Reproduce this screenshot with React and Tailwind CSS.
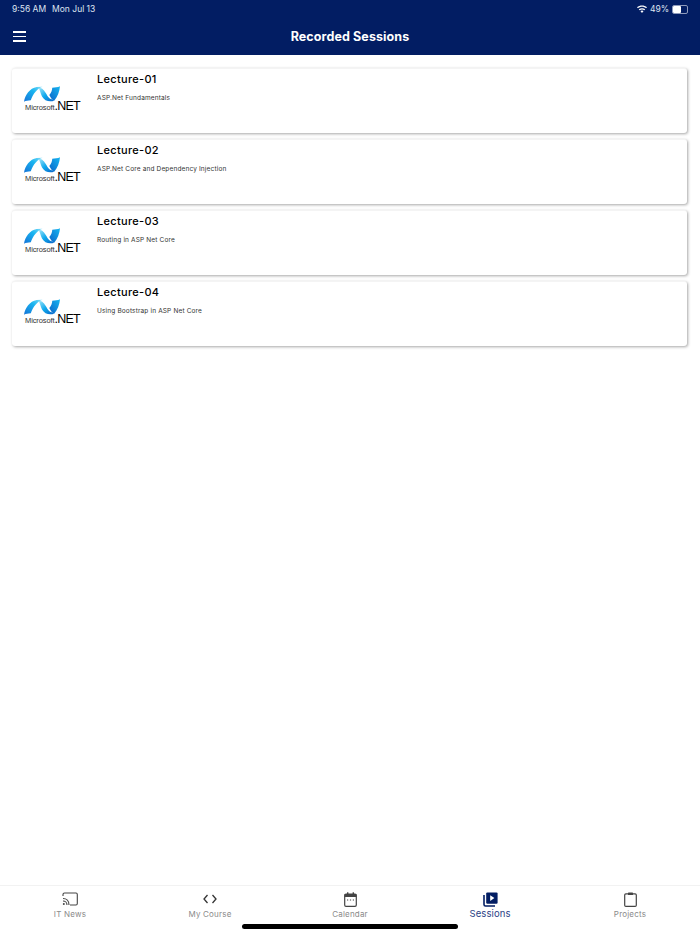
const lectures = [
  { title: 'Lecture-01', desc: 'ASP.Net Fundamentals' },
  { title: 'Lecture-02', desc: 'ASP.Net Core and Dependency Injection' },
  { title: 'Lecture-03', desc: 'Routing in ASP Net Core' },
  { title: 'Lecture-04', desc: 'Using Bootstrap in ASP Net Core' },
];

const DotNetLogo = ({ id }) => (
  <div className="w-[60px] h-[30px] flex flex-col">
    <svg width="37" height="17" viewBox="0 0 38 17" className="shrink-0 ml-[1px]">
      <defs>
        <linearGradient id={`left-${id}`} x1="0" y1="1" x2="1" y2="0">
          <stop offset="0" stopColor="#1672d6" />
          <stop offset="0.6" stopColor="#18b4f0" />
          <stop offset="1" stopColor="#7fdcf8" />
        </linearGradient>
        <linearGradient id={`mid-${id}`} x1="0" y1="0" x2="1" y2="1">
          <stop offset="0" stopColor="#9fe6fa" />
          <stop offset="0.5" stopColor="#0fa8ec" />
          <stop offset="1" stopColor="#0a63c8" />
        </linearGradient>
        <linearGradient id={`right-${id}`} x1="0" y1="1" x2="1" y2="0">
          <stop offset="0" stopColor="#0a63c8" />
          <stop offset="1" stopColor="#16b8f2" />
        </linearGradient>
      </defs>
      <path d="M0 16C1 9 6 2 13 0.8L19 0.6C14 2 9 8 7 14.5C4 14.6 2 15 0 16Z" fill={`url(#left-${id})`} />
      <path d="M15 1.5C19 1.5 21 4.5 23 8C24.5 11 26 13 28.5 13.5L31 14.8C26 16.5 21 15 18.5 10.5C17 7.5 16.5 4 15 1.5Z" fill={`url(#mid-${id})`} />
      <path d="M26 9C28 7 29 4 29 1.6C32 1.4 34.5 1 37 0C36.5 5 34.5 11 31 14.8C29 14.5 27.5 12 26 9Z" fill={`url(#right-${id})`} />
    </svg>
    <div className="flex items-end h-[10px] -mt-[2px] text-black leading-none font-['Liberation_Sans',sans-serif]">
      <span className="text-[7.5px] text-[#333] ml-[2px] tracking-[-0.1px]">Microsoft</span>
      <span className="text-[12.5px] tracking-[-0.8px] -mb-[1px]">.NET</span>
    </div>
  </div>
);

const LectureCard = ({ title, desc, id }) => (
  <div className="h-[65px] rounded-[3px] bg-white border-t border-t-[#f4f4f4] shadow-[1px_1px_3px_rgba(0,0,0,0.35)] flex">
    <div className="w-[85px] pl-[11px] pt-[17px] shrink-0">
      <DotNetLogo id={id} />
    </div>
    <div className="pt-[2px]">
      <div className="text-[11px] leading-[16px] font-medium tracking-[0.3px] text-black">{title}</div>
      <div className="text-[6.5px] leading-[10px] mt-[6px] text-[#333] tracking-[0.15px]">{desc}</div>
    </div>
  </div>
);

const TabItem = ({ label, active, children }) => (
  <div className="flex-1 flex flex-col items-center">
    <div className="h-[20px] flex items-center justify-center -mt-[2px]">{children}</div>
    <div className={active ? 'text-[9.5px] leading-[12px] tracking-[0.1px] text-[#2b3f86] -mt-[1px]' : 'text-[8px] leading-[12px] tracking-[0.2px] text-[#8a8a8a] -mt-[1px]'}>
      {label}
    </div>
  </div>
);

export default function App() {
  return (
    <div className="w-[700px] h-[934px] bg-white flex flex-col relative overflow-hidden antialiased font-['Inter',sans-serif]">
      <header className="h-[55px] bg-[#021d63] shrink-0 text-white">
        <div className="h-[18px] px-[12px] flex items-center justify-between text-[8.5px] text-[#dfe4f0]">
          <div className="flex gap-[6px]">
            <span>9:56 AM</span>
            <span>Mon Jul 13</span>
          </div>
          <div className="flex items-center gap-[3px]">
            <svg width="10" height="8" viewBox="0 0 10 8" fill="#fff">
              <path d="M5 8L3.4 6.1C4.3 5.4 5.7 5.4 6.6 6.1ZM2.6 5.2L1.8 4.2C3.6 2.8 6.4 2.8 8.2 4.2L7.4 5.2C6 4.1 4 4.1 2.6 5.2ZM1 3.3L0 2.2C2.8 -0.2 7.2 -0.2 10 2.2L9 3.3C6.7 1.3 3.3 1.3 1 3.3Z" />
            </svg>
            <span>49%</span>
            <div className="w-[16px] h-[9px] rounded-[2px] border border-[#8e9abb] flex">
              <div className="w-[8px] bg-white rounded-[1px]" />
            </div>
          </div>
        </div>
        <div className="h-[37px] px-[13px] flex items-center">
          <div className="w-[13px] flex flex-col gap-[3px]">
            <div className="h-[1.5px] bg-white" />
            <div className="h-[1.5px] bg-white" />
            <div className="h-[1.5px] bg-white" />
          </div>
          <div className="flex-1 pt-[1px] text-center text-[12.5px] font-bold tracking-[0.1px] -ml-[13px]">Recorded Sessions</div>
        </div>
      </header>

      <main className="flex-1 pl-[12px] pr-[13px] pt-[13px] flex flex-col gap-[6px]">
        {lectures.map((l, i) => (
          <LectureCard key={l.title} title={l.title} desc={l.desc} id={i} />
        ))}
      </main>

      <nav className="h-[49px] shrink-0 border-t border-[#f2f2f2] flex pt-[5px]">
        <TabItem label="IT News">
          <svg width="16" height="14" viewBox="0 0 16 14" fill="none" stroke="#444" strokeWidth="1.1">
            <path d="M1 4V2.5C1 1.7 1.6 1 2.5 1H14C14.8 1 15.3 1.6 15.3 2.5V11.5C15.3 12.3 14.8 13 14 13H8" />
            <path d="M1 6.5C4.5 6.5 7 9 7 13M1 9C3.2 9 5 10.8 5 13" />
            <circle cx="1.8" cy="12" r="1" fill="#444" stroke="none" />
          </svg>
        </TabItem>
        <TabItem label="My Course">
          <svg width="14" height="10" viewBox="0 0 14 10" fill="none" stroke="#333" strokeWidth="1.3">
            <path d="M4.5 1L1 5L4.5 9M9.5 1L13 5L9.5 9" />
          </svg>
        </TabItem>
        <TabItem label="Calendar">
          <svg width="13" height="15" viewBox="0 0 13 15" fill="none">
            <rect x="0.7" y="2" width="11.6" height="12.3" rx="1.3" stroke="#444" strokeWidth="1.2" />
            <rect x="0.7" y="2" width="11.6" height="3" fill="#444" />
            <rect x="3" y="0.3" width="1.4" height="2.5" fill="#444" />
            <rect x="8.6" y="0.3" width="1.4" height="2.5" fill="#444" />
            <path d="M3 8H4.2M5.9 8H7.1M8.8 8H10" stroke="#444" strokeWidth="1.2" />
          </svg>
        </TabItem>
        <TabItem label="Sessions" active>
          <svg width="15" height="15" viewBox="0 0 15 15" fill="none">
            <path d="M1 3V12.5C1 13.3 1.6 14 2.5 14H12" stroke="#021d63" strokeWidth="1.6" />
            <rect x="3.2" y="0.4" width="11.4" height="11.4" rx="1.2" fill="#021d63" />
            <path d="M7.2 3.2L11.4 6.1L7.2 9Z" fill="#fff" />
          </svg>
        </TabItem>
        <TabItem label="Projects">
          <svg width="13" height="15" viewBox="0 0 13 15" fill="none" stroke="#444" strokeWidth="1.2">
            <rect x="0.7" y="1.8" width="11.6" height="12.6" rx="1.2" />
            <rect x="4" y="0.4" width="5" height="2.6" fill="#444" stroke="none" rx="0.6" />
          </svg>
        </TabItem>
      </nav>

      <div className="absolute bottom-[5px] left-[242px] w-[216px] h-[5px] rounded-full bg-black" />
    </div>
  );
}
